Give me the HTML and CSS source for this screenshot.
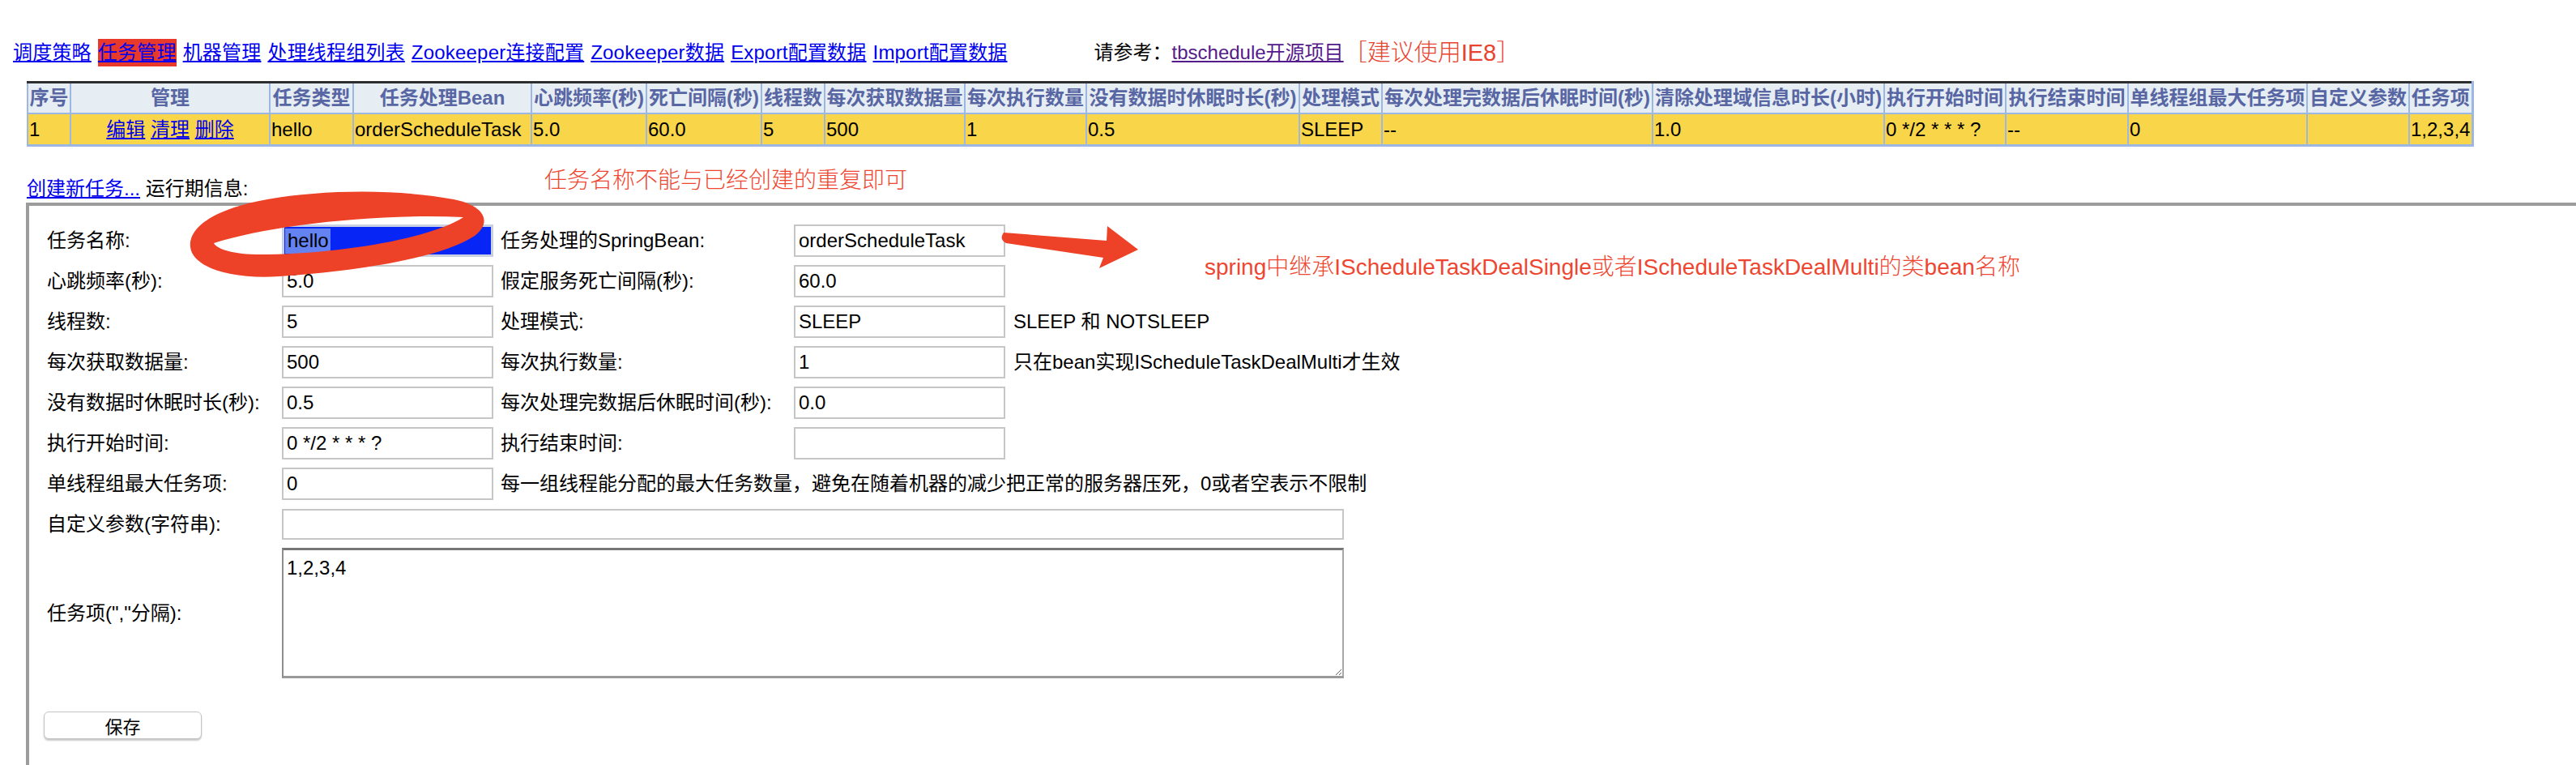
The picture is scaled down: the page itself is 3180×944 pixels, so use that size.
FILE: index.html
```html
<!DOCTYPE html>
<html lang="zh-CN">
<head>
<meta charset="utf-8">
<title>任务管理</title>
<link rel="stylesheet" href="styles.css">
</head>
<body>
<div class="nav">
  <a href="#">调度策略</a>
  <a href="#" class="active">任务管理</a>
  <a href="#">机器管理</a>
  <a href="#">处理线程组列表</a>
  <a href="#">Zookeeper连接配置</a>
  <a href="#">Zookeeper数据</a>
  <a href="#">Export配置数据</a>
  <a href="#">Import配置数据</a>
  <span class="ref">请参考：<a href="#" class="visited">tbschedule开源项目</a><span class="tip">［建议使用IE8］</span></span>
</div>

<table class="tasks">
  <colgroup>
    <col class="c53"><col class="c246"><col class="c103"><col class="c220"><col class="c142"><col class="c142">
    <col class="c78"><col class="c173"><col class="c150"><col class="c263"><col class="c102"><col class="c334">
    <col class="c286"><col class="c150"><col class="c151"><col class="c221"><col class="c126"><col class="c78">
  </colgroup>
  <thead>
    <tr>
      <th>序号</th><th>管理</th><th>任务类型</th><th>任务处理Bean</th><th>心跳频率(秒)</th><th>死亡间隔(秒)</th>
      <th>线程数</th><th>每次获取数据量</th><th>每次执行数量</th><th>没有数据时休眠时长(秒)</th><th>处理模式</th>
      <th>每次处理完数据后休眠时间(秒)</th><th>清除处理域信息时长(小时)</th><th>执行开始时间</th><th>执行结束时间</th>
      <th>单线程组最大任务项</th><th>自定义参数</th><th>任务项</th>
    </tr>
  </thead>
  <tbody>
    <tr>
      <td>1</td>
      <td class="manage"><a href="#">编辑</a> <a href="#">清理</a> <a href="#">删除</a></td>
      <td>hello</td><td>orderScheduleTask</td><td>5.0</td><td>60.0</td><td>5</td><td>500</td><td>1</td><td>0.5</td>
      <td>SLEEP</td><td>--</td><td>1.0</td><td>0 */2 * * * ?</td><td>--</td><td>0</td><td></td><td>1,2,3,4</td>
    </tr>
  </tbody>
</table>

<div class="sub"><a href="#">创建新任务...</a> 运行期信息:</div>

<div class="frame">
  <div class="form">
    <label>任务名称:</label><input class="focus" type="text" value="hello">
    <label>任务处理的SpringBean:</label><input type="text" value="orderScheduleTask"><span></span>

    <label>心跳频率(秒):</label><input type="text" value="5.0">
    <label>假定服务死亡间隔(秒):</label><input type="text" value="60.0"><span></span>

    <label>线程数:</label><input type="text" value="5">
    <label>处理模式:</label><input type="text" value="SLEEP"><span class="hint">SLEEP 和 NOTSLEEP</span>

    <label>每次获取数据量:</label><input type="text" value="500">
    <label>每次执行数量:</label><input type="text" value="1"><span class="hint">只在bean实现IScheduleTaskDealMulti才生效</span>

    <label>没有数据时休眠时长(秒):</label><input type="text" value="0.5">
    <label>每次处理完数据后休眠时间(秒):</label><input type="text" value="0.0"><span></span>

    <label>执行开始时间:</label><input type="text" value="0 */2 * * * ?">
    <label>执行结束时间:</label><input type="text" value=""><span></span>

    <label>单线程组最大任务项:</label><input type="text" value="0">
    <span class="hint span3">每一组线程能分配的最大任务数量，避免在随着机器的减少把正常的服务器压死，0或者空表示不限制</span>

    <label>自定义参数(字符串):</label><input class="wide" type="text" value="">

    <label>任务项(","分隔):</label><textarea class="items">1,2,3,4</textarea>

    <button class="save" type="button">保存</button>
  </div>
</div>

<div class="mark m1">任务名称不能与已经创建的重复即可</div>
<div class="mark m2">spring中继承IScheduleTaskDealSingle或者IScheduleTaskDealMulti的类bean名称</div>

<svg class="marks" width="3180" height="944" viewBox="0 0 3180 944">
  <path fill="#ee4228" fill-rule="evenodd" d="M235 305 C232 282 262 258 330 246 C400 234 490 233 560 246 C600 254 607 275 586 291 C546 318 440 335 345 341 C285 345 238 330 235 305 Z M264 300 C330 279 460 263 572 268 C540 290 440 312 330 314 C290 315 268 308 264 300 Z"/>
  <path fill="#ee4228" d="M1239 287 L1366 297 L1367 279 L1405 308 L1357 331 L1362 318 L1242 300 Q1233 295 1239 287 Z"/>
</svg>
</body>
</html>
```
FILE: styles.css
```css
html, body {
  margin: 0;
  padding: 0;
  overflow: hidden;
}
body {
  position: relative;
  width: 3180px;
  height: 944px;
  background: #ffffff;
  color: #000000;
  font-family: "Liberation Sans", "Noto Sans CJK SC", sans-serif;
  font-size: 24px;
}

/* top navigation */
.nav {
  display: flex;
  align-items: center;
  gap: 8px;
  padding: 48px 0 0 16px;
  height: 34px;
  line-height: 34px;
  white-space: nowrap;
  letter-spacing: 0.2px;
}
.nav a {
  display: block;
  color: #0000ee;
  text-decoration: underline;
}
.nav a.active {
  background: #e8392b;
}
.ref {
  display: flex;
  align-items: center;
  margin-left: 99px;
  color: #000;
  letter-spacing: 0;
}
.ref a.visited {
  color: #551a8b;
}
.ref .tip {
  color: #e8432f;
  font-size: 29px;
  font-weight: 300;
}

/* task table */
.tasks {
  margin: 18px 0 0 33px;
  border-collapse: collapse;
  table-layout: fixed;
  width: 3018px;
  border-top: 3px solid #2e2e2e;
  border-left: 2px solid #6c7a92;
  border-right: 3px solid #9cb7e2;
  border-bottom: 3px solid #9cb7e2;
  white-space: nowrap;
}
.c53 { width: 53px; } .c246 { width: 246px; } .c103 { width: 103px; } .c220 { width: 220px; }
.c142 { width: 142px; } .c78 { width: 78px; } .c173 { width: 173px; } .c150 { width: 150px; }
.c263 { width: 263px; } .c102 { width: 102px; } .c334 { width: 334px; } .c286 { width: 286px; }
.c151 { width: 151px; } .c221 { width: 221px; } .c126 { width: 126px; }
.tasks th, .tasks td {
  border: 2px solid #9cb7e2;
  padding: 0 1px;
  overflow: hidden;
  line-height: 30px;
}
.tasks th {
  height: 36px;
  background: #e6eef3;
  color: #5866a4;
  font-weight: bold;
  text-align: center;
}
.tasks td {
  height: 37px;
  background: #f8d549;
  text-align: left;
}
.tasks td.manage {
  text-align: center;
}
.tasks td a {
  color: #0000ee;
}

/* sub header */
.sub {
  margin: 35px 0 0 33px;
  height: 34px;
  line-height: 34px;
  white-space: nowrap;
}
.sub a {
  color: #0000ee;
}

/* form frame */
.frame {
  margin-left: 32px;
  border-top: 4px solid #9c9c9c;
  border-left: 4px solid #9c9c9c;
  height: 672px;
  padding: 18px 0 0 22px;
  overflow: hidden;
}
.form {
  display: grid;
  grid-template-columns: 290px 270px 362px 271px auto;
  grid-template-rows: repeat(8, 50px) 169px auto;
  align-items: center;
  white-space: nowrap;
}
.form label {
  line-height: 34px;
}
.form input {
  box-sizing: border-box;
  width: 261px;
  height: 40px;
  margin: 0;
  padding: 0 4px;
  border: 2px solid #c6c6c6;
  font-family: "Liberation Sans", "Noto Sans CJK SC", sans-serif;
  font-size: 24px;
  color: #000;
  background: #fff;
  outline: none;
}
.form input.focus {
  border: 3px solid #c9d0e2;
  background: linear-gradient(#6482f2, #6482f2) 1px 2px / 56px 31px no-repeat, #0726f6;
}
.form input.wide {
  grid-column: 2 / -1;
  width: 1311px;
  height: 38px;
}
.form .hint {
  line-height: 34px;
}
.form .span3 {
  grid-column: 3 / -1;
}
.form textarea.items {
  grid-column: 2 / -1;
  box-sizing: border-box;
  width: 1311px;
  height: 161px;
  margin: 0;
  padding: 8px 4px;
  border-style: solid;
  border-width: 3px 2px 3px 2px;
  border-color: #767676 #a8a8a8 #9a9a9a #8e8e8e;
  font-family: "Liberation Sans", "Noto Sans CJK SC", sans-serif;
  font-size: 24px;
  line-height: 28px;
  color: #000;
}
.form .save {
  grid-column: 1;
  justify-self: start;
  margin: 37px 0 0 -4px;
  width: 195px;
  height: 34px;
  border: 1px solid #c4c4c4;
  border-radius: 6px;
  background: #ffffff;
  box-shadow: 0 2px 2px rgba(0, 0, 0, 0.22);
  font-family: "Liberation Sans", "Noto Sans CJK SC", sans-serif;
  font-size: 22px;
  color: #000;
  padding: 0;
}

/* red annotations drawn over the page */
.mark {
  position: absolute;
  color: #ee4630;
  font-size: 28px;
  font-weight: 300;
  line-height: 34px;
  white-space: nowrap;
}
.m1 { left: 672px; top: 206px; }
.m2 { left: 1487px; top: 313px; }
.marks {
  position: absolute;
  left: 0;
  top: 0;
  pointer-events: none;
}
```
